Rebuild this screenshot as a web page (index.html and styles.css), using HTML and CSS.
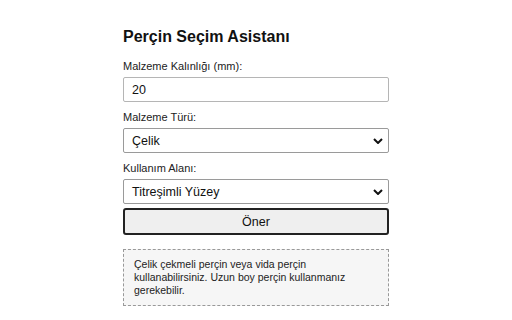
FILE: index.html
```html
<!DOCTYPE html>
<html lang="tr">
<head>
<meta charset="utf-8">
<link rel="stylesheet" href="styles.css">
</head>
<body>
<div class="app">
  <h2 class="title">Perçin Seçim Asistanı</h2>
  <label class="lbl" for="kal">Malzeme Kalınlığı (mm):</label>
  <input class="field" id="kal" type="text" value="20">
  <label class="lbl" for="tur">Malzeme Türü:</label>
  <div class="sel">
    <span>Çelik</span>
    <svg class="chev" viewBox="0 0 10 6" width="10" height="6"><path d="M1 1 L5 5 L9 1" fill="none" stroke="#111" stroke-width="2"/></svg>
  </div>
  <label class="lbl" for="alan">Kullanım Alanı:</label>
  <div class="sel sel-last">
    <span>Titreşimli Yüzey</span>
    <svg class="chev" viewBox="0 0 10 6" width="10" height="6"><path d="M1 1 L5 5 L9 1" fill="none" stroke="#111" stroke-width="2"/></svg>
  </div>
  <button class="btn">Öner</button>
  <div class="result">Çelik çekmeli perçin veya vida perçin kullanabilirsiniz. Uzun boy perçin kullanmanız gerekebilir.</div>
</div>
</body>
</html>
```
FILE: styles.css
```css
html, body { margin: 0; padding: 0; background: #fff; }
body { font-family: "Liberation Sans", Arial, sans-serif; color: #111; }
.app {
  width: 266px;
  margin: 0 auto;
  padding-top: 27px;
  display: flex;
  flex-direction: column;
}
.title {
  font-size: 16px;
  font-weight: bold;
  margin: 0 0 13px 0;
  line-height: 20px;
}
.lbl {
  font-size: 11px;
  line-height: 13px;
  color: #222;
  margin-bottom: 4px;
}
.field, .sel {
  box-sizing: border-box;
  height: 25px;
  width: 100%;
  border: 1px solid #b5b5b5;
  border-radius: 2px;
  font-family: "Liberation Sans", Arial, sans-serif;
  font-size: 12.5px;
  padding: 0 8px;
  margin: 0 0 9px 0;
  color: #111;
  background: #fff;
}
.sel {
  display: flex;
  align-items: center;
  justify-content: space-between;
  border-color: #9a9a9a;
  padding: 0 4px 0 8px;
}
.sel-last { margin-bottom: 4px; }
.chev { margin-right: 1px; }
.btn {
  box-sizing: border-box;
  height: 27px;
  width: 100%;
  border: 2px solid #222;
  border-radius: 3px;
  background: #efefef;
  font-family: "Liberation Sans", Arial, sans-serif;
  font-size: 12.5px;
  color: #111;
  margin: 0 0 14px 0;
}
.result {
  border: 1px dashed #999;
  background: #f6f6f6;
  padding: 8px 10px 8px 10px;
  font-size: 10.5px;
  line-height: 13px;
  color: #222;
}
```
